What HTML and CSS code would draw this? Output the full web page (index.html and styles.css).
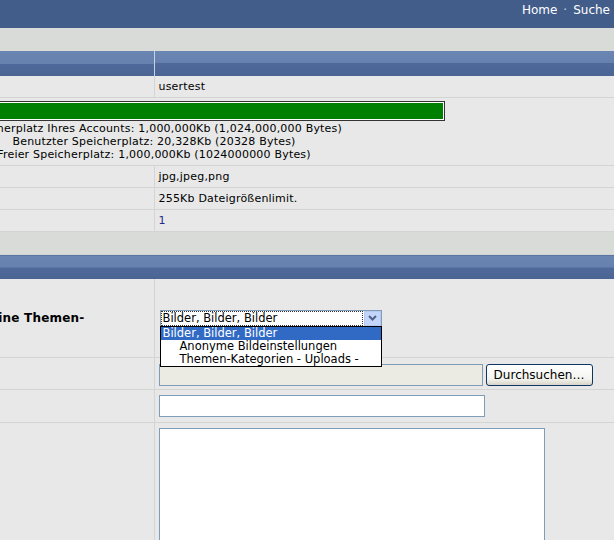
FILE: index.html
```html
<!DOCTYPE html>
<html lang="de">
<head>
  <meta charset="UTF-8">
  <meta name="viewport" content="width=device-width, initial-scale=1.0">
  <title>Bild hochladen</title>
  <link rel="stylesheet" href="styles.css">
</head>
<body>

<div class="viewport">
  <div class="page">

    <div class="topbar">
      <a href="#">Home</a><span class="sep">&middot;</span><a href="#">Suche</a>
    </div>
    <div class="band"></div>

    <table class="forumline">
      <colgroup><col class="col-half"><col class="col-half"></colgroup>
      <tr><th></th><th></th></tr>
      <tr>
        <td class="row1">Benutzername:</td>
        <td class="row2">usertest</td>
      </tr>
      <tr>
        <td class="row1 quota" colspan="2">
          <div class="quota-bar"><div class="quota-fill"></div></div>
          <div>Speicherplatz Ihres Accounts: 1,000,000Kb (1,024,000,000 Bytes)</div>
          <div>Benutzter Speicherplatz: 20,328Kb (20328 Bytes)</div>
          <div>Freier Speicherplatz: 1,000,000Kb (1024000000 Bytes)</div>
        </td>
      </tr>
      <tr>
        <td class="row1">Erlaubte Dateitypen:</td>
        <td class="row2">jpg,jpeg,png</td>
      </tr>
      <tr>
        <td class="row1">Maximale Dateigröße:</td>
        <td class="row2">255Kb Dateigrößenlimit.</td>
      </tr>
      <tr>
        <td class="row1">Anzahl Uploads:</td>
        <td class="row2"><a class="link" href="#">1</a></td>
      </tr>
      <tr><td class="spacer" colspan="2"></td></tr>
      <tr><th class="th-low" colspan="2"></th></tr>

      <tr>
        <td class="row1 label-cell tall"><b>Bitte wählen Sie eine Themen-</b></td>
        <td class="row2 tall">
          <div class="combo">
            <div class="combo-value">Bilder, Bilder, Bilder</div>
            <div class="combo-btn">
              <svg width="9" height="6" viewBox="0 0 9 6"><path d="M1 1 L4.5 4.5 L8 1" fill="none" stroke="#4d6185" stroke-width="2"/></svg>
            </div>
            <div class="combo-list">
              <div class="combo-item selected">Bilder, Bilder, Bilder</div>
              <div class="combo-item">Anonyme Bildeinstellungen</div>
              <div class="combo-item">Themen-Kategorien - Uploads -</div>
            </div>
          </div>
        </td>
      </tr>
      <tr>
        <td class="row1">Datei:</td>
        <td class="row2 file-cell">
          <div class="file-field">
            <input type="text" class="file-path" readonly>
            <button class="file-btn">Durchsuchen…</button>
          </div>
        </td>
      </tr>
      <tr>
        <td class="row1">Titel:</td>
        <td class="row2 input-cell"><input type="text" class="text-input"></td>
      </tr>
      <tr>
        <td class="row1">Beschreibung:</td>
        <td class="row2 input-cell"><textarea class="text-area"></textarea></td>
      </tr>
    </table>

  </div>
</div>

</body>
</html>
```

FILE: styles.css
```css
body {
  margin: 0;
  padding: 0;
  font-family: Verdana, "DejaVu Sans", sans-serif;
  font-size: 11px;
  letter-spacing: 0.2px;
  color: #000;
  background-color: #e7e8e7;
}

.viewport {
  width: 614px;
  height: 540px;
  overflow: hidden;
  display: flex;
  justify-content: flex-end;
}

.page {
  width: 920px;
  flex-shrink: 0;
}

.topbar {
  height: 28px;
  box-sizing: border-box;
  padding: 3px 4px 0 0;
  background-color: #435d8b;
  color: #fff;
  font-size: 12px;
  letter-spacing: 0;
  text-align: right;
  white-space: nowrap;
}

.topbar a {
  color: #fff;
  text-decoration: none;
}

.topbar .sep {
  padding: 0 6px;
  color: #c8d2e4;
}

.band {
  height: 23px;
  background-color: #d9dbd9;
}

.forumline {
  width: 100%;
  border-collapse: collapse;
  table-layout: fixed;
}

.col-half {
  width: 50%;
}

th {
  height: 25px;
  padding: 0;
  background: linear-gradient(#6a85b2, #6681ae 50%, #4f6a9a 50%, #4a6494);
}

th + th {
  border-left: 1px solid #c5d1e5;
}

th.th-low {
  height: 24px;
}

td {
  padding: 4px;
  line-height: 13px;
  background-color: #e7e8e7;
  border-bottom: 1px solid #d3d5d3;
  vertical-align: middle;
}

td + td {
  border-left: 1px solid #d3d5d3;
}

.row1 {
  padding-left: 8px;
}

.link {
  color: #25288c;
  text-decoration: none;
}

.quota {
  text-align: center;
  padding: 3px 0 4px 0;
}

.quota-bar {
  width: 582px;
  height: 20px;
  box-sizing: border-box;
  margin: 0 auto 1px auto;
  border: 1px solid #333;
  padding: 1px;
  background-color: #fff;
}

.quota-fill {
  height: 100%;
  background-color: #008000;
}

.spacer {
  height: 22px;
  padding: 0;
  background-color: #d9dbd9;
}

.label-cell {
  text-align: right;
  padding-right: 69px;
  white-space: nowrap;
  font-size: 12px;
}

.tall {
  height: 70px;
}

/* open combo box with its list */
.combo {
  position: relative;
  width: 222px;
  height: 17px;
  box-sizing: border-box;
  margin-left: 1px;
  display: flex;
  border: 1px solid #7f9db9;
  background-color: #fff;
  font-size: 11.5px;
  letter-spacing: 0;
}

.combo-value {
  flex: 1;
  margin: 0 1px 0 0;
  padding-left: 2px;
  line-height: 14px;
  outline: 1px dotted #333;
  outline-offset: -1px;
}

.combo-btn {
  width: 17px;
  box-sizing: border-box;
  border: 1px solid #b7c8f0;
  background-color: #c4d5fc;
  display: flex;
  align-items: center;
  justify-content: center;
}

.combo-list {
  position: absolute;
  top: 15px;
  left: -1px;
  width: 222px;
  box-sizing: border-box;
  border: 1px solid #000;
  background-color: #fff;
  z-index: 2;
}

.combo-item {
  height: 13px;
  line-height: 13px;
  padding-left: 19px;
  white-space: nowrap;
}

.combo-item.selected {
  padding-left: 2px;
  background-color: #316ac5;
  color: #fff;
}

.file-cell {
  padding-top: 6px;
  padding-bottom: 3px;
}

.file-field {
  display: flex;
  gap: 3px;
}

.file-path,
.text-input,
.text-area {
  margin: 0;
  box-sizing: border-box;
  border: 1px solid #7f9db9;
  font-family: inherit;
}

.file-path {
  width: 324px;
  height: 22px;
  background-color: #ebeae3;
}

.file-btn {
  width: 107px;
  height: 22px;
  padding: 0;
  border: 1px solid #0f3466;
  border-radius: 3px;
  background: linear-gradient(#ffffff, #f3f3ee 70%, #d8d4c8);
  font-family: inherit;
  font-size: 12px;
  letter-spacing: 0;
  color: #000;
}

.input-cell {
  padding-top: 5px;
  padding-bottom: 5px;
}

.text-input {
  display: block;
  width: 326px;
  height: 22px;
  background-color: #fff;
}

.text-area {
  display: block;
  width: 386px;
  height: 150px;
  background-color: #fff;
  resize: none;
}
```
